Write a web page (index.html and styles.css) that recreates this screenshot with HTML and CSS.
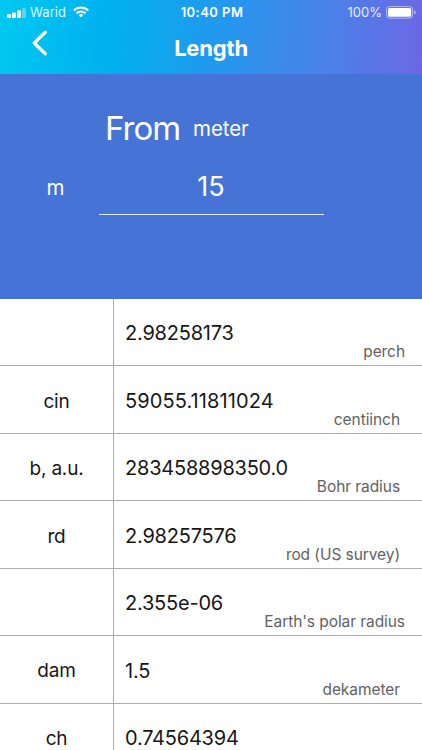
FILE: index.html
```html
<!DOCTYPE html>
<html lang="en">
<head>
<meta charset="utf-8">
<meta name="viewport" content="width=device-width, initial-scale=1">
<title>Length</title>
<link rel="stylesheet" href="styles.css">
</head>
<body>
<header class="header">
  <div class="status">
    <div class="carrier">
      <svg class="signal" width="19" height="10" viewBox="0 0 19 10" fill="#fff">
        <rect x="0" y="6" width="4" height="4" rx="1"/>
        <rect x="5" y="4.5" width="4" height="5.5" rx="1"/>
        <rect x="10" y="2.2" width="4" height="7.8" rx="1"/>
        <rect x="15" y="0" width="4" height="10" rx="1" opacity=".35"/>
      </svg>
      <span class="carrier-name">Warid</span>
      <svg class="wifi" width="16" height="12" viewBox="0 0 16 12" fill="none" stroke="#fff" stroke-width="2.1">
        <path d="M.8 4.5a10.3 10.3 0 0 1 14.4 0"/>
        <path d="M3.5 7.3a6.4 6.4 0 0 1 9 0"/>
        <path d="M8 11.6 5.6 9.2a3.5 3.5 0 0 1 4.8 0z" fill="#fff" stroke="none"/>
      </svg>
    </div>
    <span class="time">10:40 PM</span>
    <div class="power">
      <span class="percent">100%</span>
      <svg width="30" height="13" viewBox="0 0 30 13">
        <rect x=".6" y=".6" width="26" height="11.6" rx="3" fill="none" stroke="#fff" stroke-opacity=".5"/>
        <rect x="2" y="2" width="23.2" height="8.8" rx="1.6" fill="#fff"/>
        <path d="M28 4.2q1.8.7 1.8 2.2T28 8.6z" fill="#fff" opacity=".5"/>
      </svg>
    </div>
  </div>
  <nav class="nav">
    <svg class="back" width="16" height="26" viewBox="0 0 16 26" fill="none" stroke="#fff" stroke-width="3.3" stroke-linecap="round" stroke-linejoin="round"><path d="M13.3 2.2 2.2 13 13.3 23.8"/></svg>
    <h1 class="title">Length</h1>
  </nav>
</header>
<section class="source">
  <div class="from"><span class="from-label">From</span><span class="from-unit">meter</span></div>
  <div class="entry">
    <span class="symbol">m</span>
    <span class="amount">15</span>
  </div>
</section>
<main class="results">
  <div class="row plain"><div class="abbr"></div><div class="cell"><span class="value">2.98258173</span><span class="name">perch</span></div></div>
  <div class="row"><div class="abbr">cin</div><div class="cell"><span class="value loose">59055.11811024</span><span class="name">centiinch</span></div></div>
  <div class="row"><div class="abbr">b, a.u.</div><div class="cell"><span class="value">283458898350.0</span><span class="name">Bohr radius</span></div></div>
  <div class="row"><div class="abbr">rd</div><div class="cell"><span class="value">2.98257576</span><span class="name">rod (US survey)</span></div></div>
  <div class="row plain"><div class="abbr"></div><div class="cell"><span class="value">2.355e-06</span><span class="name">Earth's polar radius</span></div></div>
  <div class="row"><div class="abbr">dam</div><div class="cell"><span class="value">1.5</span><span class="name">dekameter</span></div></div>
  <div class="row"><div class="abbr">ch</div><div class="cell"><span class="value">0.74564394</span></div></div>
</main>
</body>
</html>
```
FILE: styles.css
```css
* { box-sizing: border-box; }
body {
  margin: 0;
  height: 750px;
  overflow: hidden;
  display: flex;
  flex-direction: column;
  background: #fff;
  font-family: Inter, "Liberation Sans", sans-serif;
  color: #171717;
}
.header {
  flex: none;
  height: 74px;
  color: #fff;
  background: linear-gradient(95deg, #00c8f0 0%, #00b0ef 27%, #2696ee 54%, #4c80e8 78%, #6c67e6 100%);
}
.status {
  display: grid;
  grid-template-columns: 1fr auto 1fr;
  align-items: center;
  height: 24px;
  padding: 0 6px 0 7px;
  font-size: 13px;
  line-height: 16px;
}
.carrier, .power { display: flex; align-items: center; }
.signal { margin-top: 1px; }
.carrier-name { margin: 0 7px 0 4px; letter-spacing: .1px; opacity: .88; }
.wifi { margin-top: -1px; }
.time { padding-left: 1px; font-weight: 600; letter-spacing: .45px; }
.power { justify-content: flex-end; gap: 4px; }
.percent { letter-spacing: 0; opacity: .88; }
.nav {
  display: grid;
  grid-template-columns: 60px 1fr 60px;
  height: 50px;
}
.back { margin: 6px 0 0 32px; }
.title {
  margin: 10px 0 0;
  text-align: center;
  font-size: 22px;
  line-height: 29px;
  font-weight: 700;
  letter-spacing: -.2px;
}
.source {
  flex: none;
  height: 225px;
  padding-top: 32px;
  background: #4673d6;
  color: #fff;
}
.from {
  display: flex;
  align-items: center;
  height: 44px;
  padding-left: 105px;
}
.from-label { font-size: 33px; letter-spacing: -1px; font-weight: 375; }
.from-unit { margin: 1px 0 0 13px; font-size: 20.5px; letter-spacing: -.1px; }
.entry {
  display: grid;
  grid-template-columns: 98px 225px;
  height: 65px;
  margin-left: .5px;
}
.symbol {
  padding: 26px 0 0 12px;
  text-align: center;
  font-size: 20.5px;
  line-height: 24px;
}
.amount {
  padding-top: 20px;
  text-align: center;
  font-size: 27px;
  line-height: 34px;
  border-bottom: 1.5px solid #e3eaf8;
}
.results { flex: none; }
.row {
  display: grid;
  grid-template-columns: 114px 1fr;
  height: 67.45px;
  border-bottom: 1px solid #adadad;
}
.abbr {
  display: flex;
  align-items: center;
  justify-content: center;
  padding-top: 3px;
  border-right: 1px solid #adadad;
  font-size: 19px;
  letter-spacing: -.2px;
}
.cell {
  display: flex;
  flex-direction: column;
  padding: 21.4px 22px 0 11px;
}
.plain .cell { padding-right: 17px; }
.value {
  font-size: 20px;
  line-height: 26px;
  letter-spacing: -.22px;
}
.loose { letter-spacing: .1px; }
.name {
  align-self: flex-end;
  margin-top: -4px;
  font-size: 15.5px;
  line-height: 20px;
  letter-spacing: -.07px;
  color: #626262;
}
```
